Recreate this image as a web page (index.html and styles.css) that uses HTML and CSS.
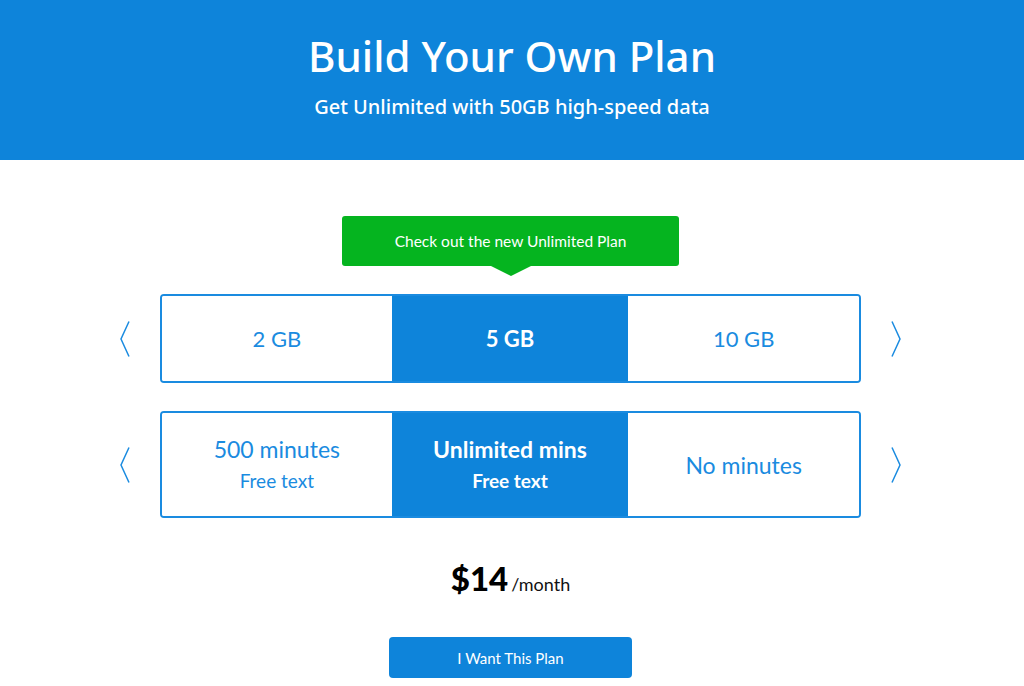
FILE: index.html
```html
<!DOCTYPE html>
<html>
<head>
<meta charset="utf-8">
<link rel="stylesheet" href="styles.css">
</head>
<body>
<header class="hero">
  <h1 class="hero-title">Build Your Own Plan</h1>
  <p class="hero-sub">Get Unlimited with 50GB high-speed data</p>
</header>
<main class="builder">
  <div class="promo">Check out the new Unlimited Plan</div>
  <div class="picker picker-data">
    <button class="arrow" aria-label="Previous"><svg width="10" height="36" viewBox="0 0 10 36"><polyline points="9,0.5 1,18 9,35.5" fill="none" stroke="#1a8be0" stroke-width="1.5"/></svg></button>
    <div class="options">
      <div class="option">2 GB</div>
      <div class="option selected">5 GB</div>
      <div class="option">10 GB</div>
    </div>
    <button class="arrow" aria-label="Next"><svg width="10" height="36" viewBox="0 0 10 36"><polyline points="1,0.5 9,18 1,35.5" fill="none" stroke="#1a8be0" stroke-width="1.5"/></svg></button>
  </div>
  <div class="picker picker-mins">
    <button class="arrow" aria-label="Previous"><svg width="10" height="36" viewBox="0 0 10 36"><polyline points="9,0.5 1,18 9,35.5" fill="none" stroke="#1a8be0" stroke-width="1.5"/></svg></button>
    <div class="options tall">
      <div class="option"><span class="main">500 minutes</span><span class="sub">Free text</span></div>
      <div class="option selected"><span class="main">Unlimited mins</span><span class="sub">Free text</span></div>
      <div class="option"><span class="main">No minutes</span></div>
    </div>
    <button class="arrow" aria-label="Next"><svg width="10" height="36" viewBox="0 0 10 36"><polyline points="1,0.5 9,18 1,35.5" fill="none" stroke="#1a8be0" stroke-width="1.5"/></svg></button>
  </div>
  <div class="price"><span class="amount">$14</span><span class="period">/month</span></div>
  <button class="cta">I Want This Plan</button>
</main>
</body>
</html>
```
FILE: styles.css
```css
* { box-sizing: border-box; }
body {
  margin: 0;
  font-family: "Lato", "Noto Sans", sans-serif;
  background: #fff;
  color: #111;
}
.hero {
  background: #0e84da;
  height: 160px;
  display: flex;
  flex-direction: column;
  align-items: center;
  color: #fff;
}
.hero-title {
  margin: 27px 0 0;
  font-family: "Noto Sans", sans-serif;
  font-weight: 500;
  font-size: 42px;
  line-height: 58px;
  letter-spacing: 0;
}
.hero-sub {
  margin: 9px 0 0;
  font-family: "Noto Sans", sans-serif;
  font-weight: 500;
  font-size: 20px;
  line-height: 26px;
}
.builder {
  display: flex;
  flex-direction: column;
  align-items: center;
  padding-top: 56px;
  padding-right: 3px;
}
.promo {
  position: relative;
  width: 337px;
  height: 50px;
  background: #05b41f;
  color: #fff;
  border-radius: 3px;
  display: flex;
  align-items: center;
  justify-content: center;
  font-size: 15.5px;
  margin-bottom: 28px;
}
.promo::after {
  content: "";
  position: absolute;
  left: 50%;
  top: 100%;
  transform: translateX(-50%);
  border-left: 20px solid transparent;
  border-right: 20px solid transparent;
  border-top: 10px solid #05b41f;
}
.picker {
  display: flex;
  align-items: center;
  gap: 30px;
}
.picker-mins { margin-top: 28px; }
.arrow {
  border: 0;
  background: none;
  padding: 0;
  width: 10px;
  height: 36px;
  display: flex;
  cursor: pointer;
}
.options {
  width: 701px;
  height: 89px;
  border: 2px solid #1a8be0;
  border-radius: 4px;
  display: grid;
  grid-template-columns: 231fr 238fr 232fr;
  overflow: hidden;
}
.options.tall { height: 107px; }
.option {
  display: flex;
  flex-direction: column;
  align-items: center;
  justify-content: center;
  color: #1a8be0;
  font-size: 22px;
  background: #fff;
}
.option.selected {
  background: #0e84da;
  color: #fff;
  font-weight: 700;
}
.option .main { font-size: 23px; line-height: 32px; }
.option .sub { font-size: 19px; line-height: 32px; }
.price {
  margin-top: 40px;
  display: flex;
  align-items: baseline;
}
.amount {
  font-size: 33px;
  font-weight: 900;
  color: #000;
  margin-right: 3px;
}
.period { font-size: 18px; color: #111; }
.cta {
  margin-top: 39px;
  width: 243px;
  height: 41px;
  border: 0;
  border-radius: 4px;
  background: #0e84da;
  color: #fff;
  font-family: "Lato", sans-serif;
  font-size: 15px;
}
```
